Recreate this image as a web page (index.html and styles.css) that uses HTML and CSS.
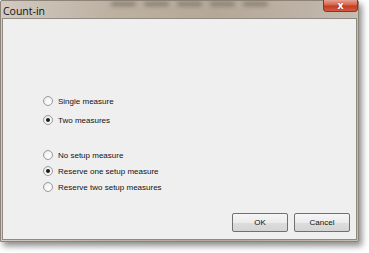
FILE: index.html
```html
<!DOCTYPE html>
<html>
<head>
<meta charset="utf-8">
<link rel="stylesheet" href="styles.css">
</head>
<body>
<div class="window">
  <div class="titlebar">
    <span class="title">Count-in</span>
    <div class="ghosts">
      <span class="ghost"></span><span class="ghost"></span><span class="ghost"></span><span class="ghost"></span><span class="ghost"></span>
    </div>
    <div class="close"><span>x</span></div>
  </div>
  <div class="client">
    <div class="group first">
      <div class="row"><span class="radio"></span><span>Single measure</span></div>
      <div class="row"><span class="radio checked"></span><span>Two measures</span></div>
    </div>
    <div class="group second">
      <div class="row"><span class="radio"></span><span>No setup measure</span></div>
      <div class="row"><span class="radio checked"></span><span>Reserve one setup measure</span></div>
      <div class="row"><span class="radio"></span><span>Reserve two setup measures</span></div>
    </div>
    <div class="buttons">
      <div class="btn">OK</div>
      <div class="btn">Cancel</div>
    </div>
  </div>
</div>
</body>
</html>
```
FILE: styles.css
```css
html, body {
  margin: 0;
  padding: 0;
  background: #ffffff;
  width: 369px;
  height: 253px;
  overflow: hidden;
}
.window {
  width: 359px;
  height: 242px;
  box-sizing: border-box;
  background: linear-gradient(90deg, #d2cbc1 0%, #bdb1a2 30%, #b5a899 60%, #bdb2a5 85%, #c6bdb2 100%);
  border: 1px solid #8c8478;
  box-shadow: 3px 4px 6px rgba(0,0,0,0.45);
  display: flex;
  flex-direction: column;
  border-radius: 2px 2px 0 0;
}
.titlebar {
  height: 17px;
  position: relative;
  display: flex;
  align-items: center;
}
.title {
  font-family: "Open Sans", "Liberation Sans", sans-serif;
  font-size: 10.5px;
  color: #111;
  padding-left: 2px;
  padding-top: 2px;
}
.ghosts {
  position: absolute;
  left: 110px;
  top: 1px;
  display: flex;
  gap: 8px;
  filter: blur(2px);
}
.ghost {
  display: block;
  width: 25px;
  height: 4px;
  background: #857a6c;
  border-radius: 2px;
}
.close {
  position: absolute;
  right: 0px;
  top: -1px;
  width: 35px;
  height: 12px;
  background: linear-gradient(180deg, #e8a192 0%, #d4634b 45%, #c23d22 55%, #d55a3f 100%);
  border: 1px solid #7a3a2f;
  border-top: none;
  border-radius: 0 0 4px 4px;
  box-sizing: border-box;
  display: flex;
  align-items: center;
  justify-content: center;
}
.close span {
  color: #fff;
  font-family: "DejaVu Sans", sans-serif;
  font-weight: bold;
  font-size: 10px;
  line-height: 11px;
  text-shadow: 0 0 1px #5a1a10;
}
.client {
  flex: 1;
  margin: 0 1px 1px 1px;
  background: #efefef;
  border: 1px solid #8f8a84;
  padding-top: 74px;
  display: flex;
  flex-direction: column;
  font-family: "Liberation Sans", Arial, sans-serif;
  font-size: 8px;
  color: #111;
}
.group {
  display: flex;
  flex-direction: column;
  padding-left: 40px;
}
.group.first { gap: 3px; }
.group.second { margin-top: 19px; }
.row {
  height: 16px;
  display: flex;
  align-items: center;
}
.radio {
  width: 8px;
  height: 8px;
  border-radius: 50%;
  border: 1px solid #9a9b9b;
  background: radial-gradient(circle at 60% 60%, #ffffff 0%, #f4f4f4 50%, #d8d8d8 100%);
  margin-right: 5px;
  display: flex;
  align-items: center;
  justify-content: center;
  flex: none;
}
.radio.checked::after {
  content: "";
  width: 4px;
  height: 4px;
  border-radius: 50%;
  background: #1b1b1b;
}
.buttons {
  margin-top: 18px;
  display: flex;
  justify-content: flex-end;
  gap: 6px;
  padding-right: 6px;
}
.btn {
  width: 56px;
  height: 19px;
  box-sizing: border-box;
  border: 1px solid #707070;
  border-radius: 2px;
  background: linear-gradient(180deg, #f6f6f6 0%, #ebebeb 50%, #dddddd 51%, #d4d4d4 100%);
  display: flex;
  align-items: center;
  justify-content: center;
  font-size: 8px;
}
```
